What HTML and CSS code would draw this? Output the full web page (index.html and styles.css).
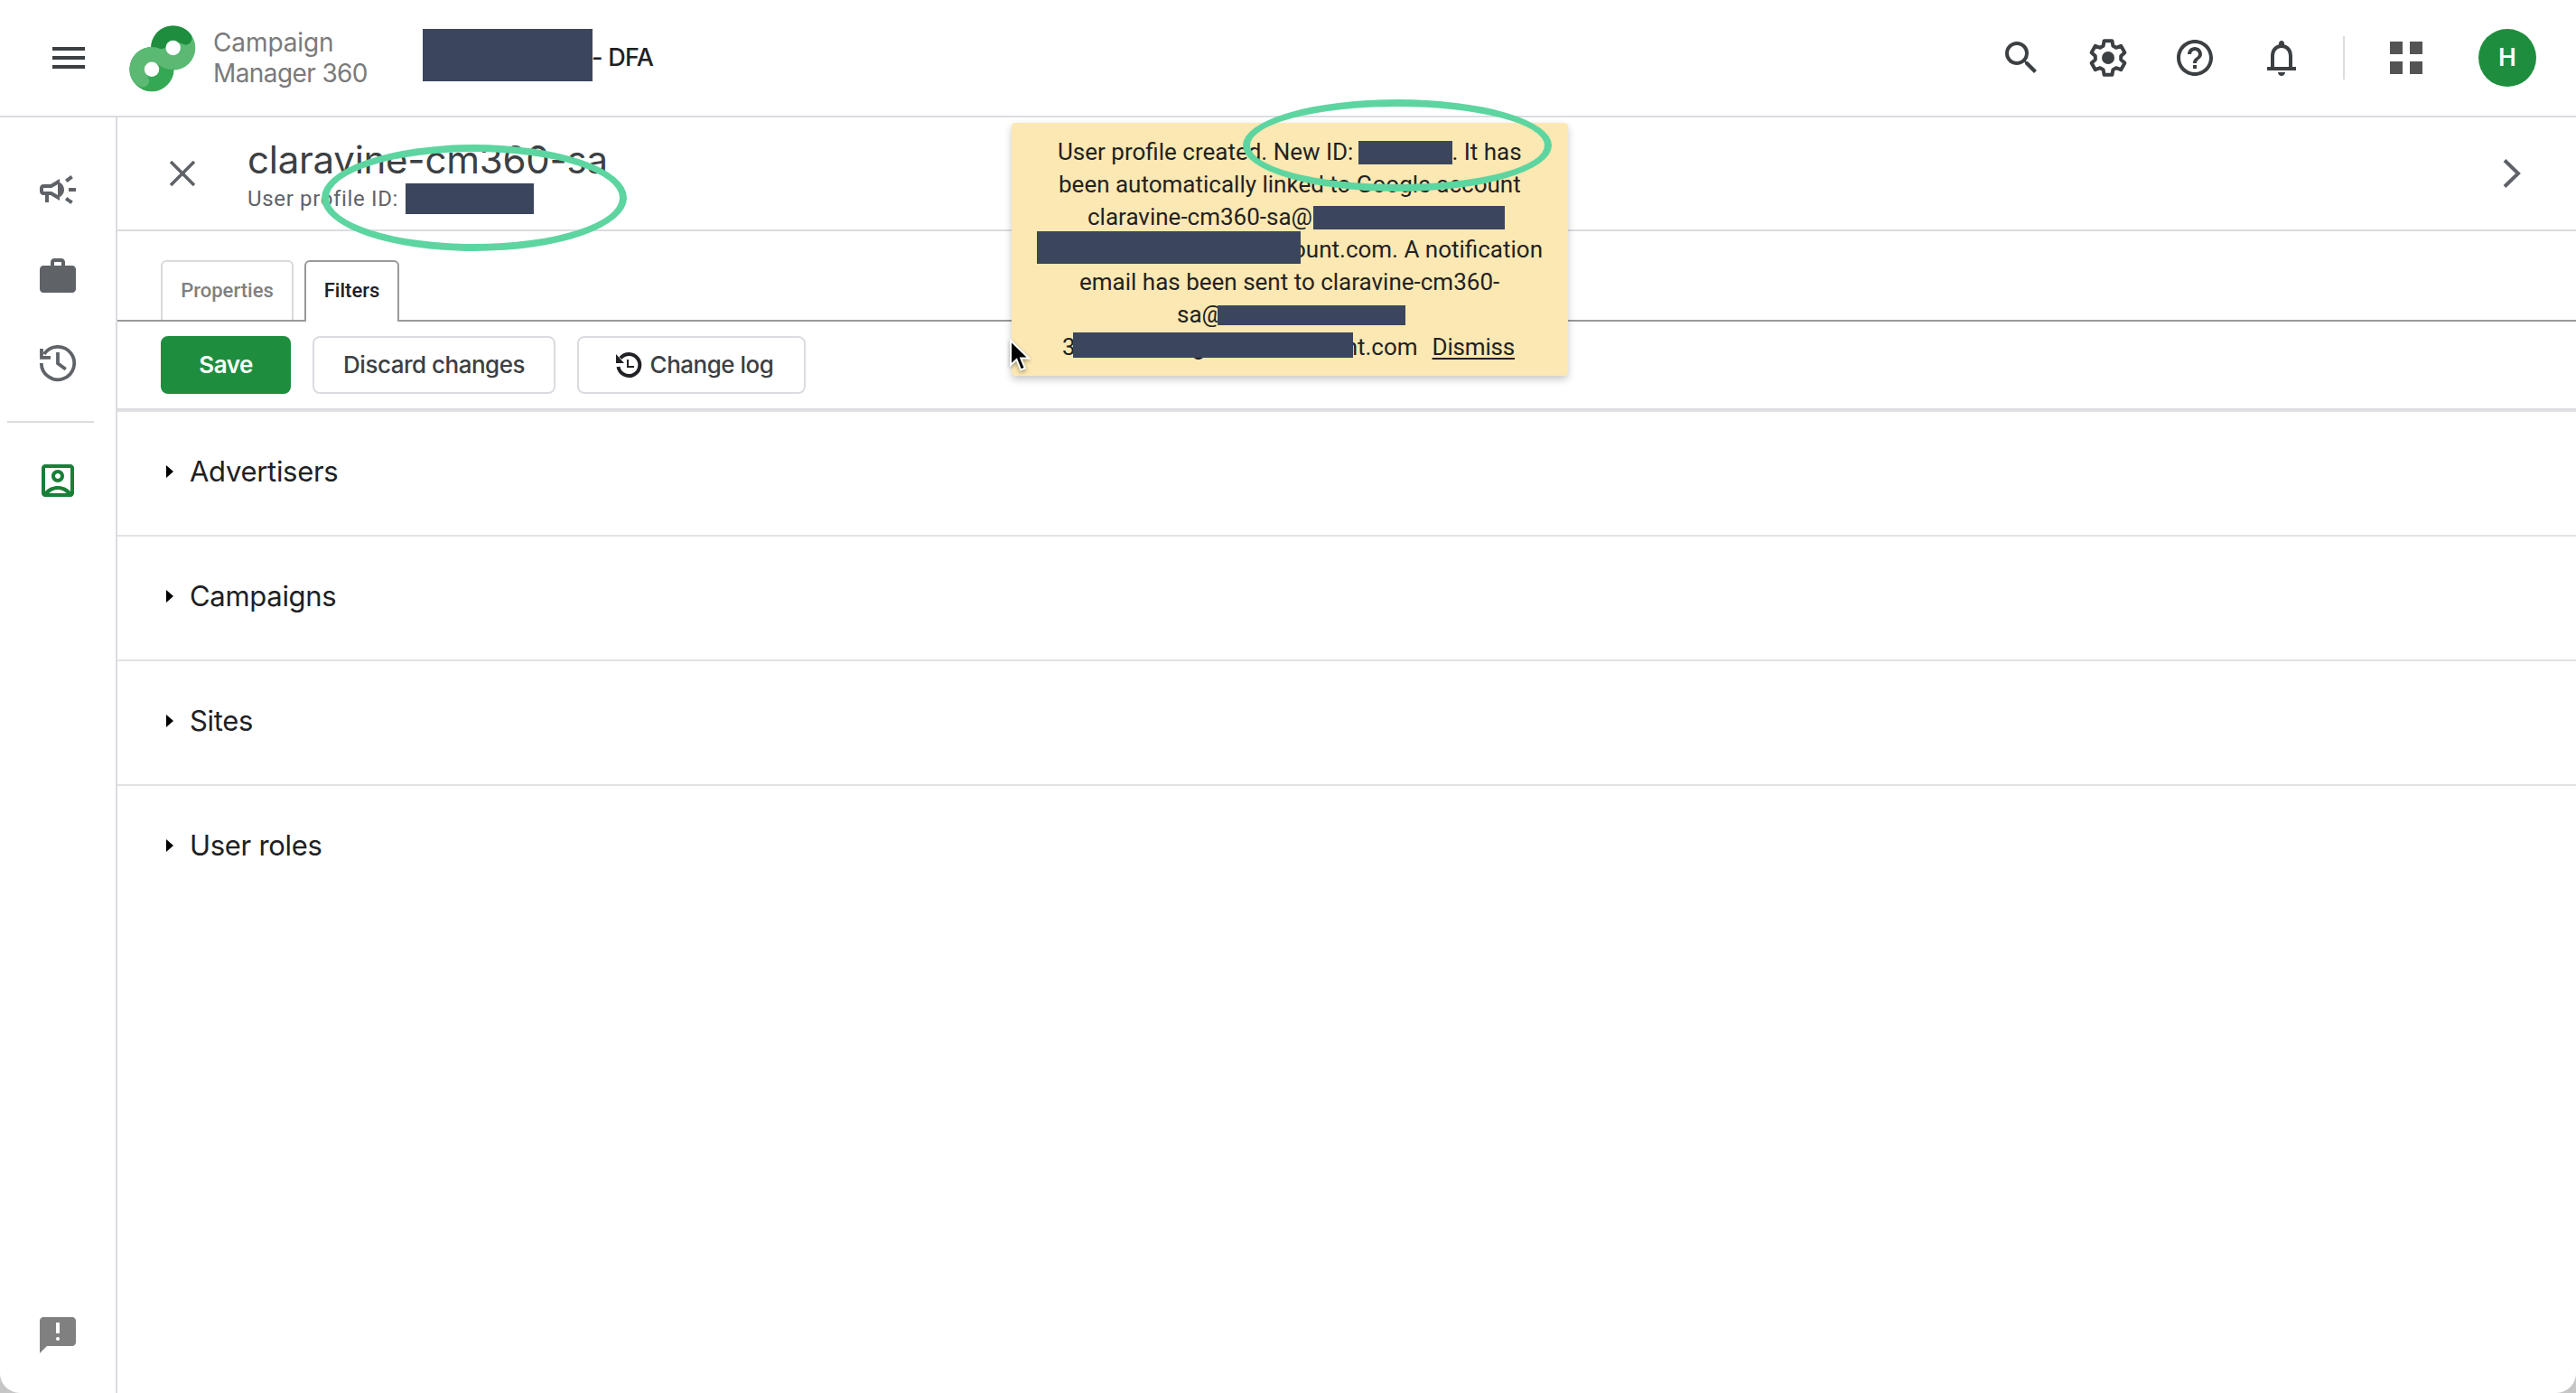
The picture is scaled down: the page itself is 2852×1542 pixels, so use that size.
FILE: index.html
```html
<!DOCTYPE html>
<html lang="en">
<head>
    <meta charset="UTF-8">
    <meta name="viewport" content="width=device-width, initial-scale=1.0">
    <title>Campaign Manager 360</title>
    <link rel="stylesheet" href="styles.css">
</head>
<body>
    <div class="window">
        <header class="topbar">
            <svg class="menu-icon" viewBox="0 0 36 24"><path d="M0 0h36v4H0zM0 10h36v4H0zM0 20h36v4H0z"/></svg>
            <svg class="logo" viewBox="0 0 74 74">
                <circle cx="48.700" cy="25" r="24.600" fill="#5bb974"/>
                <path d="M24.100 25a24.600 24.600 0 0 1 44-15A7.400 7.400 0 0 1 61.500 21.600L48.700 16.800a8.200 8.200 0 0 0-8.200 8.200v4.500L24.100 28z" fill="#1e8e3e"/>
                <circle cx="25" cy="48.700" r="24.600" fill="#34a853"/>
                <path d="M4.500 62.300A24.600 24.600 0 0 1 36 26.700L48 40 49 49C43 49.600 38 47 32 43.500L25 40.500a8.200 8.200 0 0 0-8.200 8.200L22 60A7.400 7.400 0 0 1 13.500 68.500Q7.500 66 4.500 62.300z" fill="#5bb974"/>
                <path d="M33 27L40.500 25A8.200 8.200 0 0 0 48.700 33.200L57 25L65 38A24.600 24.600 0 0 1 36 46z" fill="#5bb974"/>
                <circle cx="48.700" cy="25" r="8.200" fill="#fff"/>
                <circle cx="25" cy="48.700" r="8.200" fill="#fff"/>
            </svg>
            <div class="product">
                <div>Campaign</div>
                <div class="product-second">Manager 360</div>
            </div>
            <div class="account"><span class="redact redact-account"></span><span>- DFA</span></div>
            <div class="actions">
                <svg class="icon" viewBox="0 0 24 24"><path d="M15.500 14h-.79l-.28-.27A6.471 6.471 0 0 0 16 9.500 6.500 6.500 0 1 0 9.500 16c1.610 0 3.090-.59 4.230-1.570l.27.28v.79l5 4.990L20.490 19l-4.990-5zm-6 0C7.010 14 5 11.990 5 9.500S7.010 5 9.500 5 14 7.010 14 9.500 11.990 14 9.500 14z"/></svg>
                <svg class="icon" viewBox="0 0 24 24">
                    <path d="M9.800 2.600h4.400l.5 2.800 1.700 1 2.700-1 2.100 3.700-2.100 1.900v2l2.100 1.900-2.100 3.700-2.700-1-1.700 1-.5 2.800H9.800l-.5-2.800-1.700-1-2.700 1-2.100-3.700L4.900 13v-2L2.800 9.100l2.100-3.700 2.700 1 1.700-1z" class="gear"/>
                    <circle cx="12" cy="12" r="3.500"/>
                </svg>
                <svg class="icon" viewBox="0 0 24 24"><path d="M11 18h2v-2h-2v2zm1-16C6.480 2 2 6.480 2 12s4.480 10 10 10 10-4.480 10-10S17.520 2 12 2zm0 18c-4.410 0-8-3.590-8-8s3.590-8 8-8 8 3.590 8 8-3.590 8-8 8zm0-14c-2.210 0-4 1.790-4 4h2c0-1.100.9-2 2-2s2 .9 2 2c0 2-3 1.750-3 5h2c0-2.250 3-2.500 3-5 0-2.210-1.790-4-4-4z"/></svg>
                <svg class="icon" viewBox="0 0 24 24"><path d="M18 17v-6c0-3.070-1.630-5.640-4.500-6.320V4c0-.83-.67-1.500-1.500-1.500s-1.500.67-1.500 1.500v.68C7.640 5.360 6 7.920 6 11v6H4v2h16v-2h-2zm-2 0H8v-6c0-2.480 1.510-4.500 4-4.500s4 2.020 4 4.500v6zm-4 5c1.100 0 2-.9 2-2h-4c0 1.100.89 2 2 2z"/></svg>
                <span class="divider"></span>
                <svg class="apps-icon" viewBox="0 0 36 36"><path d="M0 0h14v14H0zM22 0h14v14H22zM0 22h14v14H0zM22 22h14v14H22z"/></svg>
                <span class="avatar">H</span>
            </div>
        </header>

        <div class="layout">
            <nav class="sidebar">
                <svg class="icon" viewBox="0 0 24 24"><path d="M18 11h4v2h-4zM16 17.610c.96.71 2.210 1.650 3.200 2.390.4-.53.8-1.070 1.200-1.600-.99-.74-2.240-1.680-3.200-2.400-.4.54-.8 1.080-1.200 1.610zM20.400 5.600c-.4-.53-.8-1.070-1.200-1.600-.99.74-2.240 1.680-3.200 2.400.4.53.8 1.070 1.200 1.600.96-.72 2.210-1.650 3.200-2.400zM4 9c-1.100 0-2 .9-2 2v2c0 1.100.9 2 2 2h1v4h2v-4h1l5 3V6L8 9H4zm5.030 1.710L12 8.950v6.100l-2.970-1.760L8.550 13H4v-2h4.550l.48-.29zM15.500 12c0-1.330-.58-2.530-1.500-3.350v6.690c.92-.81 1.500-2.010 1.500-3.340z"/><path d="M12 7.500l2 1v7l-2 1z"/></svg>
                <svg class="icon" viewBox="0 0 24 24"><path d="M20 6h-4V4c0-1.110-.89-2-2-2h-4c-1.110 0-2 .89-2 2v2H4c-1.110 0-1.990.89-1.990 2L2 19c0 1.110.89 2 2 2h16c1.110 0 2-.89 2-2V8c0-1.110-.89-2-2-2zm-6 0h-4V4h4v2z"/></svg>
                <svg class="icon line-icon" viewBox="0 0 24 24"><path d="M2.900 12A9.100 9.100 0 1 0 4.400 7"/><path d="M3 4v4.900h5M12 6v6.200l4.400 3.200"/></svg>
                <span class="sidebar-divider"></span>
                <svg class="icon active" viewBox="0 0 24 24"><path d="M19 3H5c-1.110 0-2 .9-2 2v14c0 1.100.89 2 2 2h14c1.100 0 2-.9 2-2V5c0-1.100-.9-2-2-2zm0 2v13c-1.700-1.900-4.200-3-7-3s-5.300 1.100-7 3V5zM7.200 19c1.300-1.200 3-2 4.800-2s3.500.8 4.800 2zM12 13c1.940 0 3.500-1.560 3.500-3.500S13.940 6 12 6 8.500 7.560 8.500 9.500 10.060 13 12 13zm0-5c.83 0 1.500.67 1.500 1.500S12.830 11 12 11s-1.500-.67-1.500-1.500S11.170 8 12 8z"/></svg>
                <svg class="icon feedback" viewBox="0 0 24 24"><path d="M20 2H4c-1.100 0-2 .9-2 2v18l4-4h14c1.100 0 2-.9 2-2V4c0-1.100-.9-2-2-2zm-7 9h-2V5h2v6z"/><circle cx="12" cy="14" r="1" fill="#fff"/></svg>
            </nav>

            <main class="content">
                <div class="page-header">
                    <svg class="close-icon" viewBox="0 0 28 28"><path d="M1 1l26 26M27 1L1 27"/></svg>
                    <div class="heading">
                        <h1>claravine-cm360-sa</h1>
                        <div class="profile-id"><span>User profile ID:</span><span class="redact redact-profile"></span></div>
                    </div>
                    <svg class="chevron" viewBox="0 0 20 32"><path d="M2 1.500L17 16 2 30.500"/></svg>
                </div>

                <div class="tabs">
                    <div class="tab tab-properties">Properties</div>
                    <div class="tab tab-filters selected">Filters</div>
                </div>

                <div class="toolbar">
                    <button class="btn btn-save">Save</button>
                    <button class="btn btn-discard">Discard changes</button>
                    <button class="btn btn-log">
                        <svg class="log-icon" viewBox="0 0 28 28"><path d="M2.500 16A12 12 0 1 0 5 6.500"/><path d="M0 2l9 10H0z" class="solid"/><path d="M13 8v8h7" class="hand"/></svg>
                        <span>Change log</span>
                    </button>
                </div>

                <section class="filter"><span class="caret"></span><span>Advertisers</span></section>
                <section class="filter"><span class="caret"></span><span>Campaigns</span></section>
                <section class="filter"><span class="caret"></span><span>Sites</span></section>
                <section class="filter"><span class="caret"></span><span>User roles</span></section>
            </main>
        </div>

        <div class="toast">
            <div class="toast-line line-1"><span>User profile created. New ID:</span><span class="redact"></span><span>. It has</span></div>
            <div class="toast-line line-2"><span>been automatically linked to Google account</span></div>
            <div class="toast-line line-3"><span>claravine-cm360-sa@</span><span class="redact"></span></div>
            <div class="toast-line line-4"><span class="redact"></span><span>ount.com. A notification</span></div>
            <div class="toast-line line-5"><span>email has been sent to claravine-cm360-</span></div>
            <div class="toast-line line-6"><span>sa@</span><span class="redact"></span></div>
            <div class="toast-line line-7"><span>3</span><span class="hidden-letter">g</span><span class="redact"></span><span>nt.com</span><a class="dismiss">Dismiss</a></div>
        </div>

        <div class="ring ring-profile"></div>
        <div class="ring ring-toast"></div>
        <svg class="cursor" viewBox="0 0 24 38"><path d="M2 2v27l6.500-6 4.600 11.500 4.800-2-4.700-11H22z"/></svg>
    </div>
</body>
</html>
```
FILE: styles.css
```css
* {
    margin: 0;
    padding: 0;
    box-sizing: border-box;
}

body {
    background: #c6c6c6;
    font-family: Roboto, "Liberation Sans", sans-serif;
    color: #202124;
}

.window {
    position: relative;
    height: 1542px;
    display: flex;
    flex-direction: column;
    background: #fff;
    border-radius: 0 0 22px 22px;
    overflow: hidden;
}

.redact {
    background: #3b465d;
    flex-shrink: 0;
}

.icon {
    width: 48px;
    height: 48px;
    flex-shrink: 0;
}

/* top bar */
.topbar {
    display: flex;
    align-items: center;
    height: 130px;
    padding: 0 44px 0 58px;
    border-bottom: 2px solid #dadce0;
    fill: #3c4043;
}

.menu-icon {
    width: 36px;
    height: 24px;
}

.logo {
    width: 74px;
    height: 74px;
    margin: 2px 0 0 49px;
}

.product {
    width: 232px;
    margin-left: 19px;
    font: 28px/34px Inter, sans-serif;
    letter-spacing: -0.1px;
    color: #7a7a7a;
    white-space: nowrap;
}

.product-second {
    letter-spacing: -0.6px;
}

.account {
    display: flex;
    align-items: center;
    font: 500 27px/58px Inter, sans-serif;
    letter-spacing: -0.7px;
}

.redact-account {
    width: 188px;
    height: 58px;
    margin: -6px -1px 0 0;
    z-index: 1;
}

.actions {
    display: flex;
    align-items: center;
    gap: 48px;
    margin-left: auto;
}

.gear {
    fill: none;
    stroke: #3c4043;
    stroke-width: 2;
    stroke-linejoin: round;
}

.divider {
    width: 2px;
    height: 48px;
    margin: 0 2px 0 -4px;
    background: #dadce0;
}

.apps-icon {
    width: 36px;
    height: 36px;
    margin-right: 14px;
    fill: #545454;
}

.avatar {
    width: 64px;
    height: 64px;
    border-radius: 50%;
    background: #1e8e3e;
    color: #fff;
    font-size: 28px;
    font-weight: 500;
    line-height: 63px;
    text-align: center;
}

/* sidebar */
.layout {
    display: flex;
    flex: 1;
}

.sidebar {
    display: flex;
    flex-direction: column;
    align-items: center;
    width: 130px;
    padding: 56px 0 40px;
    border-right: 2px solid #dadce0;
    gap: 48px;
    fill: #5f6368;
}

.line-icon {
    fill: none;
    stroke: #5f6368;
    stroke-width: 1.9;
}

.sidebar-divider {
    width: 96px;
    height: 2px;
    margin: -8px 16px -8px 0;
    background: #dadce0;
}

.sidebar .active {
    fill: #188038;
}

.sidebar .feedback {
    margin-top: auto;
    fill: #808080;
}

.content {
    flex: 1;
}

/* page header */
.page-header {
    display: flex;
    align-items: center;
    height: 126px;
    padding: 0 61px 0 58px;
    border-bottom: 2px solid #dadce0;
}

.close-icon {
    width: 28px;
    height: 28px;
    fill: none;
    stroke: #5f6368;
    stroke-width: 3.6;
}

.heading {
    padding-top: 3px;
    margin-left: 58px;
}

h1 {
    font: 42px/52px Inter, sans-serif;
    letter-spacing: -0.25px;
    color: #3c4043;
}

.profile-id {
    display: flex;
    align-items: center;
    font-size: 24px;
    line-height: 34px;
    letter-spacing: 0.65px;
    color: #5f6368;
}

.redact-profile {
    width: 142px;
    height: 34px;
    margin-left: 8px;
}

.chevron {
    width: 20px;
    height: 32px;
    margin-left: auto;
    fill: none;
    stroke: #5f6368;
    stroke-width: 4;
}

/* tabs */
.tabs {
    display: flex;
    align-items: flex-end;
    gap: 12px;
    height: 100px;
    padding-left: 48px;
    border-bottom: 2px solid #999;
}

.tab {
    height: 66px;
    border: 2px solid #dadada;
    border-bottom: none;
    border-radius: 6px 6px 0 0;
    color: #808080;
    font-size: 22px;
    font-weight: 500;
    line-height: 64px;
    text-align: center;
}

.tab-properties {
    width: 147px;
}

.tab-filters {
    width: 105px;
}

.tab.selected {
    height: 68px;
    margin-bottom: -2px;
    border-color: #999;
    background: #fff;
    color: #202124;
}

/* toolbar */
.toolbar {
    display: flex;
    align-items: center;
    gap: 24px;
    height: 100px;
    padding: 0 0 2px 48px;
    border-bottom: 2px solid #e3e3e3;
    box-shadow: inset 0 -2px #dadce0;
}

.btn {
    display: flex;
    align-items: center;
    justify-content: center;
    height: 64px;
    border: 2px solid #dadce0;
    border-radius: 8px;
    background: #fff;
    color: #3c4043;
    font: 500 26px/34px Inter, sans-serif;
    letter-spacing: -0.5px;
    white-space: nowrap;
}

.btn-save {
    width: 144px;
    border-color: #1e8e3e;
    background: #1e8e3e;
    color: #fff;
    font-weight: 600;
}

.btn-discard {
    width: 269px;
}

.btn-log {
    width: 253px;
    padding-left: 7px;
    gap: 10px;
}

.log-icon {
    width: 28px;
    height: 28px;
    fill: none;
    stroke: #202124;
    stroke-width: 4;
    overflow: visible;
}

.log-icon .solid {
    fill: #202124;
    stroke: none;
}

.log-icon .hand {
    stroke-width: 2;
}

/* filter sections */
.filter {
    display: flex;
    align-items: center;
    gap: 18px;
    height: 138px;
    padding: 0 0 4px 54px;
    border-bottom: 2px solid #e2e2e2;
    font: 31px/40px Inter, sans-serif;
    letter-spacing: -0.3px;
}

.filter:last-child {
    border-bottom-color: transparent;
}

.caret {
    border: 7px solid transparent;
    border-left: 8px solid #000;
    border-right: none;
}

/* notification */
.toast {
    position: absolute;
    left: 1120px;
    top: 136px;
    width: 616px;
    height: 280px;
    padding: 14px 28px;
    border-radius: 4px;
    background: #fce8b2;
    box-shadow: 0 4px 8px rgba(0, 0, 0, 0.22);
    color: #222;
    font-size: 26px;
    line-height: 36px;
}

.toast-line {
    display: flex;
    height: 36px;
    white-space: nowrap;
}

.line-1 { padding-left: 23px; }
.line-1 .redact { width: 104px; height: 26px; margin: 6px -1px 0 6px; }
.line-2 { padding-left: 24px; }
.line-3 { padding-left: 56px; }
.line-3 .redact { width: 212px; height: 26px; margin: 6px 0 0 1px; }
.line-4 .redact { width: 292px; height: 36px; margin: -2px -9px 0 0; z-index: 1; }
.line-5 { padding-left: 47px; }
.line-6 { padding-left: 155px; }
.line-6 .redact { width: 208px; height: 22px; margin: 8px 0 0 -6px; z-index: 1; }
.line-7 { padding-left: 28px; }
.line-7 .redact { width: 310px; height: 28px; margin: 2px -9px 0 -3px; z-index: 1; }

.hidden-letter {
    width: 0;
    text-indent: 129px;
}

.dismiss {
    margin-left: 16px;
    letter-spacing: -0.2px;
    text-decoration: underline;
    text-decoration-thickness: 2px;
    text-underline-offset: 3px;
}

/* annotations */
.ring {
    position: absolute;
    border: 8px solid #5dd5a0;
    border-radius: 50%;
}

.ring-profile {
    left: 356px;
    top: 160px;
    width: 338px;
    height: 118px;
}

.ring-toast {
    left: 1376px;
    top: 110px;
    width: 342px;
    height: 102px;
}

.cursor {
    position: absolute;
    left: 1117px;
    top: 375px;
    width: 24px;
    height: 38px;
    fill: #000;
    stroke: #fff;
    stroke-width: 2;
    filter: drop-shadow(0 2px 2px rgba(0, 0, 0, 0.35));
}
```
